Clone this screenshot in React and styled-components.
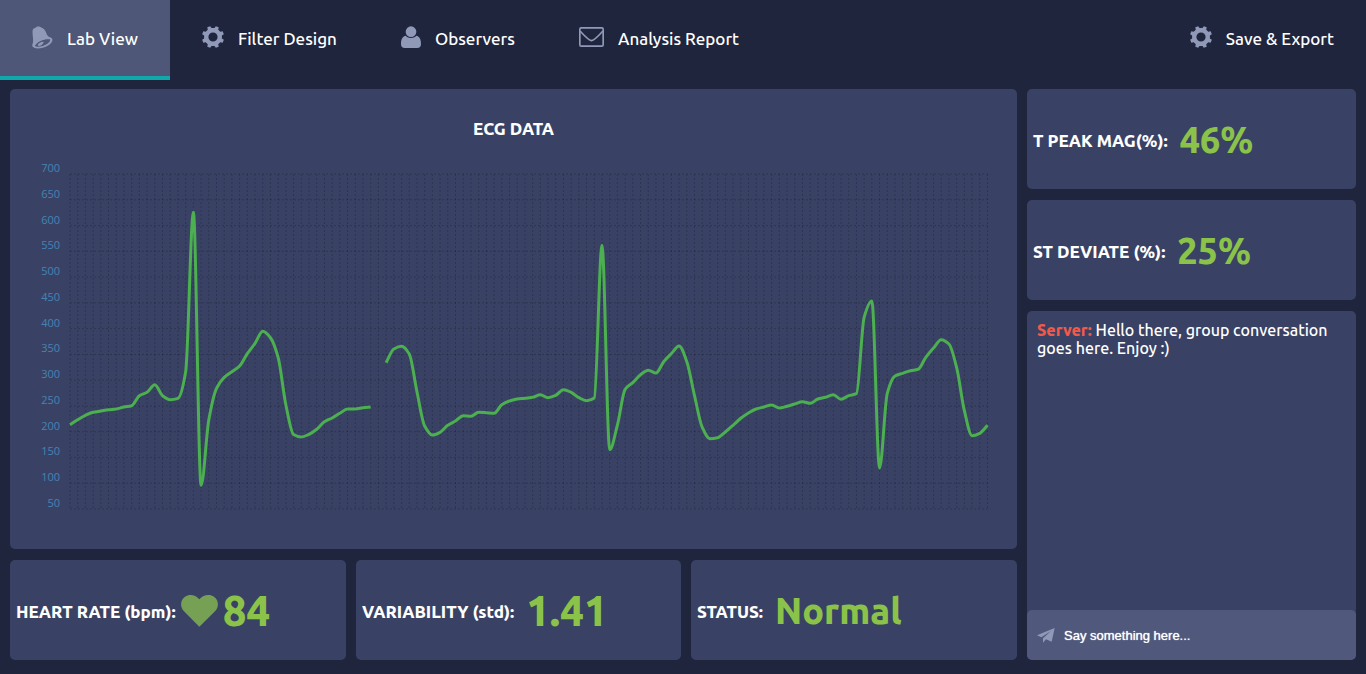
import React from 'react';
import styled, { createGlobalStyle } from 'styled-components';

const GlobalStyle = createGlobalStyle`
  *, *::before, *::after { box-sizing: border-box; }
  body {
    margin: 0;
    background: #1f253d;
    color: #fff;
    font-family: "Ubuntu", "Noto Sans", sans-serif;
    font-size: 16px;
  }
  h2, p { margin: 0; }
`;

/* ---------- navigation ---------- */

const Nav = styled.nav`
  display: flex;
  height: 80px;
`;

const Tab = styled.a`
  display: flex;
  align-items: center;
  gap: 14px;
  padding: 2px 32px 0;
  margin-left: ${(p) => (p.$end ? 'auto' : '0')};
  border-bottom: 4px solid ${(p) => (p.$active ? '#11a8ab' : 'transparent')};
  background: ${(p) => (p.$active ? '#4e5777' : 'transparent')};
  color: #fff;
  font-size: 17px;
  font-weight: 500;
  line-height: 24px;
  text-decoration: none;
  white-space: nowrap;
`;

const Icon = styled.svg`
  display: block;
  flex: none;
  margin-bottom: ${(p) => (p.$raised ? '4px' : '0')};
  fill: #9099b7;
`;

/* ---------- page layout ---------- */

const Board = styled.main`
  display: grid;
  grid-template-columns: minmax(0, 1007fr) minmax(0, 329fr);
  gap: 10px;
  padding: 9px 10px 14px;
`;

const Column = styled.div`
  display: flex;
  flex-direction: column;
  gap: 11px;
`;

const StatRow = styled.div`
  display: grid;
  grid-template-columns: 336fr 325fr 326fr;
  gap: 10px;
`;

const Panel = styled.section`
  background: #394264;
  border-radius: 5px;
`;

const ChartPanel = styled(Panel)`
  padding: 30px 0 19px;
`;

const ChartTitle = styled.h2`
  margin-bottom: 11px;
  font-size: 17px;
  font-weight: 800;
  line-height: 20px;
  text-align: center;
`;

const Chart = styled.svg`
  display: block;
  width: 100%;
  height: auto;
`;

const GridLine = styled.line`
  stroke: rgba(0, 0, 0, 0.2);
  stroke-width: 1px;
  stroke-dasharray: 2px;
`;

const Trace = styled.path`
  fill: none;
  stroke: #4caf50;
  stroke-width: 3px;
`;

const AxisLabel = styled.text`
  fill: #4682b4;
  font-family: "Open Sans", sans-serif;
  font-size: 11px;
  text-anchor: end;
`;

const StatPanel = styled(Panel)`
  display: flex;
  align-items: center;
  height: 100px;
  padding: 2px 6px 0;
`;

const StatLabel = styled.span`
  padding-top: 2px;
  font-size: 17px;
  font-weight: 800;
  line-height: 24px;
  white-space: nowrap;
`;

const StatValue = styled.span`
  display: flex;
  align-items: center;
  gap: 5px;
  margin-left: ${(p) => (p.$tight ? '5px' : '12px')};
  color: #8bc34a;
  font-size: ${(p) => (p.$large ? '42px' : '36px')};
  font-weight: 800;
  line-height: 48px;
  white-space: nowrap;
`;

const ChatPanel = styled(Panel)`
  display: flex;
  flex: 1;
  flex-direction: column;
  justify-content: space-between;
`;

const Message = styled.p`
  padding: 10px;
  font-size: 16px;
  font-weight: 500;
  line-height: 18px;
`;

const Sender = styled.strong`
  color: #f15a4a;
  font-weight: 800;
`;

const Composer = styled.label`
  display: flex;
  align-items: center;
  gap: 9px;
  height: 50px;
  padding: 0 10px;
  border-radius: 5px;
  background: #50597b;
`;

const ComposerInput = styled.input`
  flex: 1;
  min-width: 0;
  padding: 2px 0 0;
  border: 0;
  outline: 0;
  background: transparent;
  color: #fff;
  font-family: "Liberation Sans", sans-serif;
  font-size: 13px;
  line-height: 20px;
  text-shadow: 0 0 1px #fff;
  &::placeholder { color: #fff; opacity: 1; }
`;

/* ---------- icons ---------- */

const BellIcon = () => (
  <Icon $raised width="21" height="23" viewBox="0 0 63 69" aria-hidden="true">
    <path d="M2 54 C6 42 0 24 2 12 C5 5 12 6 14 2 C20 0 27 3 29 5 C39 8 42 19 45 26 C48 32 54 34 60 38 L50 40 C36 38 16 46 10 58 Z" />
    <path
      fillRule="evenodd"
      d="M2 53 C9 40 40 29 57 35 C66 40 60 52 47 59 C32 68 9 70 3 63 C0 60 0 57 2 53 Z M9 60 C15 65 34 61 46 53 C56 46 57 39 50 38 C36 37 8 50 9 60 Z"
    />
    <path d="M17 57 C20 51 29 46 35 48 C34 54 27 60 19 60 Z" />
  </Icon>
);

const gearPath = (() => {
  const parts = [];
  const at = (r, deg) => {
    const a = (deg * Math.PI) / 180;
    return `${(11 + r * Math.cos(a)).toFixed(2)} ${(11 + r * Math.sin(a)).toFixed(2)}`;
  };
  for (let k = 0; k < 8; k += 1) {
    const c = 22.5 + 45 * k;
    parts.push(`${k ? 'L' : 'M'}${at(9, c - 13)} L${at(11.2, c - 8)} L${at(11.2, c + 8)} L${at(9, c + 13)}`);
  }
  return `${parts.join(' ')} Z M15.6 11 A4.6 4.6 0 1 0 6.4 11 A4.6 4.6 0 1 0 15.6 11 Z`;
})();

const GearIcon = () => (
  <Icon $raised width="22" height="22" viewBox="0 0 22 22" aria-hidden="true">
    <path fillRule="evenodd" d={gearPath} />
  </Icon>
);

const UserIcon = () => (
  <Icon $raised width="20" height="22" viewBox="0 0 60 66" aria-hidden="true">
    <circle cx="30" cy="17" r="16" />
    <path d="M14 29 C22 38 38 38 46 29 C56 31 60 40 60 54 C60 62 56 66 49 66 H11 C4 66 0 62 0 54 C0 40 4 31 14 29 Z" />
  </Icon>
);

const MailIcon = () => (
  <Icon $raised width="25" height="20" viewBox="0 0 75 60" aria-hidden="true">
    <rect x="2.5" y="2.5" width="70" height="55" rx="4" fill="none" stroke="#9099b7" strokeWidth="5" />
    <path d="M3 12 C14 24 28 40 37.5 41 C47 40 61 24 72 12" fill="none" stroke="#9099b7" strokeWidth="5" />
  </Icon>
);

const HeartIcon = () => (
  <Icon width="37" height="32" viewBox="0 0 111 96" aria-hidden="true">
    <path
      fill="#76a053"
      d="M55 95 L9 49 C-4 35 -2 14 12 5 C26 -4 44 0 55 13 C66 0 85 -4 99 5 C113 14 115 35 102 49 Z"
    />
  </Icon>
);

const PlaneIcon = () => (
  <Icon width="18" height="15" viewBox="0 0 54 45" aria-hidden="true">
    <path d="M53 0 L0 22 L13 28 L42 9 L18 31 V44 L27 34 L44 41 Z" />
  </Icon>
);

/* ---------- chart ---------- */

const PLOT = { left: 70, right: 987.5, top: 174, bottom: 509 };
const LEVELS = [700, 650, 600, 550, 500, 450, 400, 350, 300, 250, 200, 150, 100, 50];

const TRACE = [
  424.7, 419.7, 415.3, 412.3, 411, 409.7, 409, 407, 405.7, 395.7, 392.3, 384.7, 395.7, 399.7, 398.3, 371.7,
  212.3, 485.3, 420, 388.3, 377.3, 371.7, 366, 353.7, 343.3, 331.3, 337.7, 357.7, 405, 434.5, 437, 434.3,
  429.3, 421.7, 418, 413.3, 409, 409, 407.7, 407, null, 362.7, 349, 346.3, 354, 391.7, 426, 435,
  432.3, 425.3, 421, 415.7, 416.3, 412.3, 412.7, 413.3, 404.7, 401, 399, 398.3, 397.3, 394.7, 397.7, 395.3,
  389.7, 392.3, 397.7, 400.7, 398, 245.3, 449.7, 425, 389.3, 382.7, 374.7, 370.3, 373, 361.7, 353.5, 346,
  361.7, 395.7, 427.3, 438.7, 437.7, 432, 425.3, 418.3, 413, 409, 407, 405, 408, 406.3, 404, 401.7,
  403.3, 399, 397.3, 394.7, 399.3, 395.7, 393.7, 317.3, 301, 468, 393.3, 376, 373.3, 370.7, 369.3, 357.3,
  348, 339.7, 344, 367.7, 410.7, 435.7, 433.3, 425.3,
];

const STEP = (PLOT.right - PLOT.left) / (TRACE.length - 1);
const ROW = (PLOT.bottom - PLOT.top) / (LEVELS.length - 1);

/* Monotone cubic interpolation: the curve never overshoots its samples. */
function smooth(ys, start) {
  const n = ys.length;
  const slope = ys.slice(1).map((y, i) => (y - ys[i]) / STEP);
  const m = ys.map((_, i) => {
    if (i === 0) return slope[0];
    if (i === n - 1) return slope[n - 2];
    const a = slope[i - 1];
    const b = slope[i];
    return a * b <= 0 ? 0 : (2 * a * b) / (a + b);
  });
  const x = (i) => PLOT.left + (start + i) * STEP;
  let d = `M${x(0)},${ys[0]}`;
  for (let i = 0; i < n - 1; i += 1) {
    d += ` C${x(i) + STEP / 3},${ys[i] + (m[i] * STEP) / 3}`;
    d += ` ${x(i + 1) - STEP / 3},${ys[i + 1] - (m[i + 1] * STEP) / 3}`;
    d += ` ${x(i + 1)},${ys[i + 1]}`;
  }
  return d;
}

const GAP = TRACE.indexOf(null);
const tracePath = `${smooth(TRACE.slice(0, GAP), 0)} ${smooth(TRACE.slice(GAP + 1), GAP + 1)}`;

const EcgChart = () => (
  <Chart viewBox="10 150 1007 380" role="img" aria-label="ECG data">
    {TRACE.map((_, i) => (
      <GridLine key={i} x1={PLOT.left + i * STEP} x2={PLOT.left + i * STEP} y1={PLOT.top} y2={PLOT.bottom} />
    ))}
    {LEVELS.map((level, i) => (
      <GridLine key={level} x1={PLOT.left} x2={PLOT.right} y1={PLOT.top + i * ROW} y2={PLOT.top + i * ROW} />
    ))}
    {LEVELS.map((level, i) => (
      <AxisLabel key={level} x="60" y={Math.round(PLOT.top + i * ROW - 2)}>
        {level}
      </AxisLabel>
    ))}
    <Trace d={tracePath} />
  </Chart>
);

const Stat = ({ label, value, large, icon }) => (
  <StatPanel>
    <StatLabel>{label}</StatLabel>
    <StatValue $large={large} $tight={Boolean(icon)}>
      {icon}
      {value}
    </StatValue>
  </StatPanel>
);

export default function App() {
  return (
    <>
      <GlobalStyle />
      <Nav>
        <Tab href="#lab" $active><BellIcon />Lab View</Tab>
        <Tab href="#filter"><GearIcon />Filter Design</Tab>
        <Tab href="#observers"><UserIcon />Observers</Tab>
        <Tab href="#report"><MailIcon />Analysis Report</Tab>
        <Tab href="#export" $end><GearIcon />Save &amp; Export</Tab>
      </Nav>
      <Board>
        <Column>
          <ChartPanel>
            <ChartTitle>ECG DATA</ChartTitle>
            <EcgChart />
          </ChartPanel>
          <StatRow>
            <Stat label="HEART RATE (bpm):" value="84" large icon={<HeartIcon />} />
            <Stat label="VARIABILITY (std):" value="1.41" large />
            <Stat label="STATUS:" value="Normal" />
          </StatRow>
        </Column>
        <Column>
          <Stat label="T PEAK MAG(%):" value="46%" />
          <Stat label="ST DEVIATE (%):" value="25%" />
          <ChatPanel>
            <Message><Sender>Server:</Sender> Hello there, group conversation goes here. Enjoy :)</Message>
            <Composer>
              <PlaneIcon />
              <ComposerInput type="text" placeholder="Say something here..." aria-label="Message" />
            </Composer>
          </ChatPanel>
        </Column>
      </Board>
    </>
  );
}
